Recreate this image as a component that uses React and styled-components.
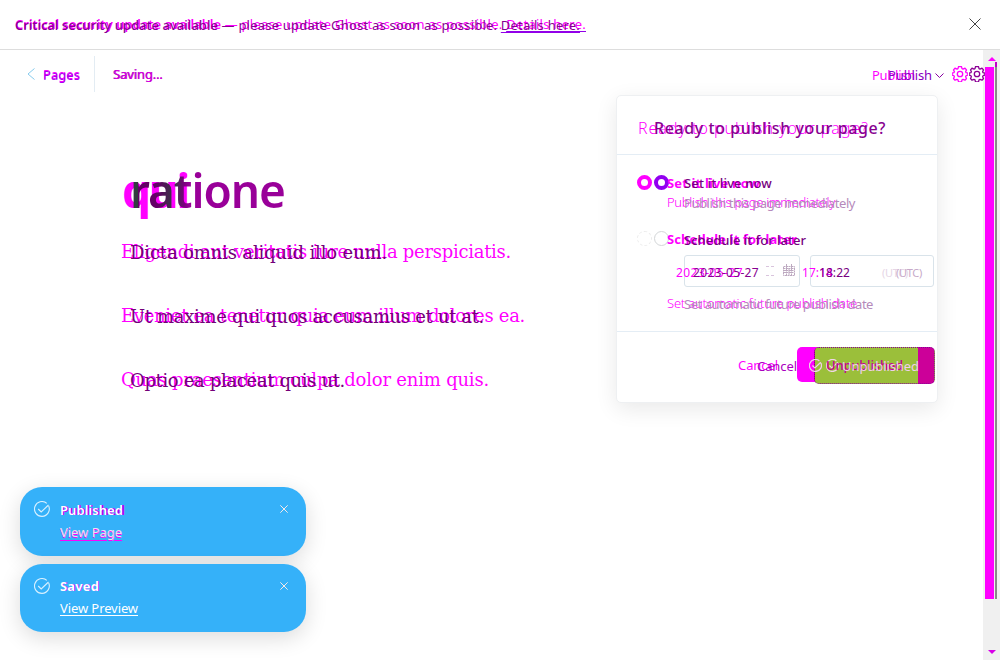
import React, { useLayoutEffect, useRef, useState } from 'react';
import styled, { createGlobalStyle } from 'styled-components';

const MAGENTA = '#ff00ff';
const PURPLE = '#870090';
const VIOLET = '#9200e8';

const Global = createGlobalStyle`
  * { box-sizing: border-box; }
  body { margin: 0; background: #fff; overflow: hidden; font: 13px/18px "Noto Sans", "Open Sans", sans-serif; }
  button { font: inherit; border: 0; padding: 0; background: none; }
  svg { display: block; flex: none; fill: none; }
`;

const Screen = styled.div`
  position: relative;
  display: flex;
  flex-direction: column;
  width: 1000px;
  height: 660px;
  overflow: hidden;
`;

/* Two revisions of the same text share one grid cell. */
const Pair = styled.div`
  display: grid;
  justify-items: start;
  align-items: start;
  white-space: pre;
  font-size: ${p => p.$size || 13}px;
  line-height: ${p => p.$line || 18}px;
  font-family: ${p => (p.$serif ? '"DejaVu Serif", "Liberation Serif", serif' : 'inherit')};
`;
const Revision = styled.span`
  grid-area: 1 / 1;
  color: ${p => p.$color || 'inherit'};
  font-weight: ${p => p.$weight || 400};
  margin-left: ${p => p.$x || 0}px;
  margin-top: ${p => p.$y || 0}px;
  text-decoration: ${p => (p.$underline ? 'underline' : 'none')};
  text-underline-offset: 2px;
  u { text-decoration-color: ${VIOLET}; }
`;

/* Tracks the text so that its line has the given width. */
function Fit({ width, children, ...rest }) {
  const ref = useRef(null);
  const [track, setTrack] = useState(0);
  useLayoutEffect(() => {
    const el = ref.current;
    setTrack((width - el.getBoundingClientRect().width) / el.textContent.length);
  }, [width]);
  return <Revision ref={ref} style={{ letterSpacing: track }} {...rest}>{children}</Revision>;
}

const Banner = styled.header`
  display: flex;
  justify-content: space-between;
  height: 50px;
  padding: 15px 19px 0 15px;
  border-bottom: 1px solid #ddd;
  svg { margin-top: 3px; }
`;
const Body = styled.div`
  display: flex;
  height: 610px;
`;
const Editor = styled.main`
  width: 983px;
`;
const Toolbar = styled.nav`
  display: flex;
  align-items: flex-start;
  height: 50px;
  padding: 6px 0 0 27px;
`;
const Back = styled.div`
  display: flex;
  gap: 8px;
  width: 68px;
  height: 36px;
  padding-top: 10px;
  border-right: 1px solid #e3ecf3;
  svg { margin-top: 2px; }
`;
const Status = styled.div`
  width: 777px;
  padding: 9px 0 0 18px;
`;
const PublishMenu = styled.div`
  display: flex;
  width: 80px;
  padding-top: 10px;
  svg { margin: 7px 0 0 3px; }
`;
const Gears = styled.div`
  display: flex;
  gap: 1px;
  width: 34px;
  padding-top: 10px;
`;
const Actions = styled.div`
  display: flex;
  margin-left: -1px;
  padding-left: 1px;
  transform: translateX(3px);
`;
const Article = styled.article`
  padding: 60px 0 0 121px;
`;
const Heading = styled(Pair)`
  height: 79px;
  span:last-child {
    background: linear-gradient(90deg, #333c40 0 8px, #630066 8px 28px, #333c40 44px, #7a007e 54px, #990099 60px);
    background-clip: text;
    color: transparent;
  }
`;
const Paragraph = styled(Pair)`
  height: 64px;
`;
const Scrollbar = styled.div`
  display: flex;
  flex-direction: column;
  width: 17px;
  height: 610px;
  padding: 7px 2px 6px;
  background: #f0f0f0;
`;
const Arrow = styled.i`
  align-self: center;
  border: 4px solid transparent;
  border-top: ${p => (p.$down ? `4px solid #d800e8` : '0')};
  border-bottom: ${p => (p.$down ? '0' : `4px solid ${MAGENTA}`)};
`;
const Track = styled.div`
  display: flex;
  flex: 1;
  gap: 1px;
  padding-top: 1px;
`;
const Thumb = styled.div`
  width: 9px;
  height: 532px;
  margin-top: 5px;
  background: ${MAGENTA};
`;
const SlimThumb = styled.div`
  width: 2px;
  height: 537px;
  background: linear-gradient(#c000c8 5px, #888 5px);
`;

const Popover = styled.section`
  position: absolute;
  left: 616px;
  top: 95px;
  width: 322px;
  height: 308px;
  background: #fff;
  border: 1px solid #eef0f2;
  border-radius: 5px;
  box-shadow: 0 6px 22px rgba(0, 0, 0, 0.09);
`;
const PopoverHead = styled.div`
  height: 59px;
  padding: 20px 0 0 21px;
  border-bottom: 1px solid #e4edf5;
`;
const Options = styled.div`
  height: 177px;
  padding: 20px 0 0 20px;
  border-bottom: 1px solid #e4edf5;
`;
const Option = styled.div`
  display: flex;
  height: ${p => p.$height}px;
`;
const Radios = styled.div`
  display: flex;
  gap: 2px;
  width: 30px;
`;
const Ring = styled.i`
  flex: none;
  width: 15px;
  height: 15px;
  border-radius: 50%;
  border: ${p => p.$border};
`;
const Copy = styled.div`
  display: flex;
  flex-direction: column;
  margin-top: -1px;
`;
const Label = styled(Pair)`
  height: 20px;
  & + & { margin-top: -1px; }
`;
const Fields = styled.div`
  display: flex;
  gap: 10px;
  height: 32px;
  margin: 5px 0 7px 17px;
`;
const Field = styled.div`
  display: flex;
  width: ${p => p.$width}px;
  border: 1px solid #d9e3ea;
  border-radius: 3px;
  padding-top: 8px;
`;
const FieldText = styled(Pair)`
  margin-left: -9px;
  width: ${p => p.$width}px;
`;
const Calendars = styled.div`
  display: flex;
  gap: 7px;
`;
const Footer = styled.div`
  display: flex;
  padding: 15px 0 0 121px;
`;
const Cancel = styled(Pair)`
  width: 59px;
  padding-top: 9px;
`;
const ButtonBack = styled.div`
  width: 121px;
  height: 35px;
  padding-left: 17px;
  border-radius: 5px;
  background: linear-gradient(90deg, ${MAGENTA} 30px, transparent 30px);
`;
const Button = styled.button`
  display: flex;
  width: 121px;
  height: 37px;
  border: 1px dotted #880099;
  border-radius: 5px;
  background: linear-gradient(90deg, #9bbf3a 103px, #cc0099 103px);
`;
const ButtonIcons = styled.div`
  display: flex;
  gap: 4px;
  width: 31px;
  margin: 11px -17px 0 -6px;
`;
const ButtonText = styled(Pair)`
  margin-top: 8px;
`;

const Toasts = styled.aside`
  position: absolute;
  left: 20px;
  top: 487px;
  display: flex;
  flex-direction: column;
  gap: 8px;
`;
const Toast = styled.div`
  display: flex;
  width: 286px;
  height: ${p => p.$height}px;
  padding: 14px 17px 0 14px;
  border-radius: 22px;
  background: #35b1f9;
  box-shadow: 0 6px 22px rgba(0, 0, 0, 0.14);
`;
const ToastCopy = styled.div`
  width: 230px;
  padding-left: 10px;
  margin-top: ${p => p.$lift || 0}px;
`;
const ToastLine = styled(Pair)`
  height: 22px;
`;
const CloseSlot = styled.div`
  padding-top: 4px;
`;

const Cross = ({ size, color, w = 1 }) => (
  <svg width={size} height={size} viewBox="0 0 12 12" stroke={color} strokeWidth={w}><path d="M.5.5l11 11M11.5.5l-11 11" /></svg>
);
const Gear = ({ color }) => (
  <svg width="16" height="16" viewBox="0 0 16 16" stroke={color} strokeWidth="1.3" strokeLinejoin="round">
    <path d="M6.5.6h3l.5 2 1 .5 2-.9 1.5 1.7-.9 1.8.5 1 1.8.5v2l-1.8.5-.5 1 .9 1.8-1.5 1.7-2-.9-1 .5-.5 2h-3l-.5-2-1-.5-2 .9-1.5-1.7.9-1.8-.5-1-1.8-.5v-2l1.8-.5.5-1-.9-1.8L3 2.200l2 .9 1-.5z" />
    <circle cx="8" cy="8" r="2.700" />
  </svg>
);
const CheckCircle = ({ size, color, w = 1.1 }) => (
  <svg width={size} height={size} viewBox="0 0 16 16" stroke={color} strokeWidth={w}>
    <path d="M14.700 5A7.400 7.400 0 1 1 12.800 2.400M4.200 8l3 3 7.300-7" />
  </svg>
);
const Calendar = ({ color, full }) => (
  <svg width="12" height="12" viewBox="0 0 12 12" stroke={color}>
    {full ? <path d="M.5 2.500h11v9H.5zM.5 4.500h11M3.500 0v11M6 4v7M8.500 0v11M1 6.500h10M1 8.500h10" strokeDasharray="2 .5" />
      : <path d="M2 2.500h8M2 11.500h8" strokeDasharray="3 2" />}
  </svg>
);

export default function App() {
  return (
    <Screen>
      <Global />
      <Banner>
        <Pair>
          <Revision $color={MAGENTA}>
            <Fit width={206} $weight={600}>Critical security update available</Fit>
            <Fit width={365}> — please update Ghost as soon as possible. <u>Details here.</u></Fit>
          </Revision>
          <Revision $y={1} $color={PURPLE}>
            <Fit width={203} $weight={500}>Critical security update available</Fit>
            <Fit width={362}> — please update Ghost as soon as possible. <u>Details here.</u></Fit>
          </Revision>
        </Pair>
        <Cross size={12} color="#444" />
      </Banner>
      <Body>
        <Editor>
          <Toolbar>
            <Back>
              <svg width="8" height="12" viewBox="0 0 8 12" stroke="#86cbed"><path d="M7.500.5L1 6l6.500 5.500" /></svg>
              <Pair>
                <Fit width={37} $color={MAGENTA} $y={-1} $weight={400}>Pages</Fit>
                <Fit width={37} $color="#a800ee" $weight={400}>Pages</Fit>
              </Pair>
            </Back>
            <Status>
              <Pair>
                <Fit width={50} $color="#a000a8">Saving...</Fit>
                <Fit width={49} $x={1} $color="#d800e0">Saving...</Fit>
              </Pair>
            </Status>
            <Actions>
              <PublishMenu>
                <Pair>
                  <Fit width={43} $color={MAGENTA}>Publish</Fit>
                  <Fit width={44} $x={16} $color="#8700c0">Publish</Fit>
                </Pair>
                <svg width="9" height="5" viewBox="0 0 9 5" stroke="#8700a0"><path d="M.5.5l4 4 4-4" /></svg>
              </PublishMenu>
              <Gears>
                <Gear color={MAGENTA} />
                <Gear color="#8b0095" />
              </Gears>
            </Actions>
          </Toolbar>
          <Article>
            <Heading $size={46} $line={60}>
              <Fit width={66} $x={1} $color={MAGENTA} $weight={700}>qui</Fit>
              <Fit width={155} $x={9} $color="#990099" $weight={600}>ratione</Fit>
            </Heading>
            <Paragraph $serif $size={18} $line={26}>
              <Fit width={390} $color={MAGENTA}>Eligendi aut veritatis iure nulla perspiciatis.</Fit>
              <Fit width={257} $x={9} $y={1} $color="#740079">Dicta omnis aliquid illo eum.</Fit>
            </Paragraph>
            <Paragraph $serif $size={18} $line={26}>
              <Fit width={404} $color={MAGENTA}>Eveniet ea tenetur quia eum illum dolores ea.</Fit>
              <Fit width={354} $x={9} $y={1} $color="#740079">Ut maxime qui quos accusamus et ut at.</Fit>
            </Paragraph>
            <Paragraph $serif $size={18} $line={26}>
              <Fit width={368} $color={MAGENTA}>Quas praesentium culpa dolor enim quis.</Fit>
              <Fit width={215} $x={9} $y={1} $color="#740079">Optio ea placeat quis ut.</Fit>
            </Paragraph>
          </Article>
        </Editor>
        <Scrollbar>
          <Arrow />
          <Track>
            <Thumb />
            <SlimThumb />
          </Track>
          <Arrow $down />
        </Scrollbar>
      </Body>

      <Popover>
        <PopoverHead>
          <Pair $size={16} $line={24}>
            <Fit width={231} $color={MAGENTA} $weight={300}>Ready to publish your page?</Fit>
            <Fit width={232} $x={16} $color={PURPLE} $weight={500}>Ready to publish your page?</Fit>
          </Pair>
        </PopoverHead>
        <Options>
          <Option $height={56}>
            <Radios>
              <Ring $border={`4px solid ${MAGENTA}`} />
              <Ring $border="4px solid #9200f0" />
            </Radios>
            <Copy>
              <Label>
                <Fit width={93} $color={MAGENTA} $weight={700}>Set it live now</Fit>
                <Fit width={88} $x={17} $color="#770080" $weight={500}>Set it live now</Fit>
              </Label>
              <Label>
                <Fit width={168} $color={MAGENTA} $weight={300}>Publish this page immediately</Fit>
                <Fit width={171} $x={17} $y={1} $color="#b58abb">Publish this page immediately</Fit>
              </Label>
            </Copy>
          </Option>
          <Option $height={90}>
            <Radios>
              <Ring $border="1px dashed #ececec" />
              <Ring $border="1px solid #d3d6d8" />
            </Radios>
            <Copy>
              <Label>
                <Fit width={130} $color={MAGENTA} $weight={700}>Schedule it for later</Fit>
                <Fit width={122} $x={17} $y={1} $color="#770080" $weight={500}>Schedule it for later</Fit>
              </Label>
              <Fields>
                <Field $width={116}>
                  <FieldText $width={88} $size={12}>
                    <Fit width={67} $color={MAGENTA}>2023-05-27</Fit>
                    <Fit width={66} $x={17} $color={PURPLE}>2023-05-27</Fit>
                  </FieldText>
                  <Calendars>
                    <Calendar color="#d9c4dd" />
                    <Calendar full color="#bda9c0" />
                  </Calendars>
                </Field>
                <Field $width={124}>
                  <FieldText $width={80} $size={12}>
                    <Fit width={31} $color={MAGENTA}>17:14</Fit>
                    <Fit width={31} $x={17} $color="#770080">18:22</Fit>
                  </FieldText>
                  <Pair $size={11}>
                    <Fit width={26} $color="#e6d6e6">(UTC)</Fit>
                    <Fit width={26} $x={14} $color="#c7a9c9">(UTC)</Fit>
                  </Pair>
                </Field>
              </Fields>
              <Label>
                <Fit width={190} $color={MAGENTA} $weight={300}>Set automatic future publish date</Fit>
                <Fit width={189} $x={17} $y={1} $color="#b58abb">Set automatic future publish date</Fit>
              </Label>
            </Copy>
          </Option>
        </Options>
        <Footer>
          <Cancel>
            <Fit width={40} $color={MAGENTA}>Cancel</Fit>
            <Fit width={40} $x={19} $y={1} $color="#aa00c0">Cancel</Fit>
          </Cancel>
          <ButtonBack>
            <Button>
              <ButtonIcons>
                <CheckCircle size={13} w={1.5} color="#f0d0e8" />
                <CheckCircle size={13} w={1.5} color="#efd5e5" />
              </ButtonIcons>
              <ButtonText>
                <Fit width={77} $x={3} $weight={500} $color="#c30094">Unpublished</Fit>
                <Fit width={77} $x={19} $y={1} $color="#f0d0ea">Unpublished</Fit>
              </ButtonText>
            </Button>
          </ButtonBack>
        </Footer>
      </Popover>

      <Toasts>
        <Toast $height={69}>
          <CheckCircle size={16} color="#d7f0ff" />
          <ToastCopy>
            <ToastLine>
              <Fit width={64} $color="#b000f5" $x={1} $weight={700}>Published</Fit>
              <Fit width={63} $color="#fff" $weight={600}>Published</Fit>
            </ToastLine>
            <ToastLine>
              <Fit width={62} $color={MAGENTA} $underline $y={1}>View Page</Fit>
              <Fit width={62} $color="#e6e6ee">View Page</Fit>
            </ToastLine>
          </ToastCopy>
          <CloseSlot><Cross size={8} color="#f5e9e9" w={1.500} /></CloseSlot>
        </Toast>
        <Toast $height={68}>
          <CheckCircle size={16} color="#d7f0ff" />
          <ToastCopy $lift={-1}>
            <ToastLine>
              <Fit width={39} $x={1} $color="#a000ff" $weight={600}>Saved</Fit>
              <Fit width={39} $color="#fff" $weight={700}>Saved</Fit>
            </ToastLine>
            <ToastLine>
              <Fit width={78} $color="#fff" $underline>View Preview</Fit>
            </ToastLine>
          </ToastCopy>
          <CloseSlot><Cross size={8} color="#f5e9e9" w={1.500} /></CloseSlot>
        </Toast>
      </Toasts>
    </Screen>
  );
}
